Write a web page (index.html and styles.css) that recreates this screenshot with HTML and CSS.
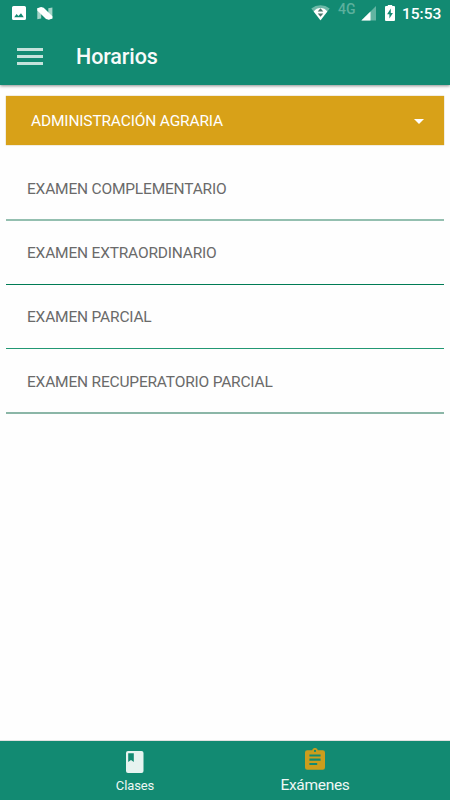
FILE: index.html
```html
<!DOCTYPE html>
<html lang="es">
<head>
<meta charset="utf-8">
<title>Horarios</title>
<link rel="stylesheet" href="styles.css">
</head>
<body>
<header class="top">
  <div class="status">
    <svg class="s-image" width="14" height="14" viewBox="0 0 14 14"><path fill="#fff" fill-rule="evenodd" d="M1.600 0h10.800Q14 0 14 1.600v10.800q0 1.600-1.600 1.600H1.600Q0 14 0 12.400V1.600Q0 0 1.600 0zM2.200 11.200h9.600L9 7.300 6.400 10 4.600 8.100z"/></svg>
    <svg class="s-n" width="16" height="13" viewBox="0 0 16 13"><path fill="#a4d4c8" d="M.3 1.200 4.200.4v11L.3 12.300zM11.300 1.200 15.400.4v11.200l-4.100.9z"/><path fill="#fff" d="M.3 1.200 4.200.1 6.700.8 15.400 9.200v2.400L11.800 12.800 9 12 .3 3.500z"/></svg>
    <svg class="s-wifi" width="19" height="16" viewBox="0 0 19 16"><path fill="#6db9a8" d="M9.500.3Q14.700.3 18.700 3.400L9.500 15.500.300 3.400Q4.300.3 9.500.3z"/><path fill="#fff" d="M9.500 3.100Q13.700 3.100 16.300 6.500L9.500 15.300 2.700 6.500Q5.300 3.100 9.500 3.100z"/><path fill="#4e746a" d="M9.500 3.200 12.300 6.500H6.700zM6.700 8.400h5.600L9.500 11.700z"/></svg>
    <span class="net">4G</span>
    <svg class="s-signal" width="15" height="15" viewBox="0 0 15 15"><path fill="#62b4a1" d="M15 0v14.500H.5z"/><path fill="#fff" d="M9.500 5.500v9H.3z"/></svg>
    <svg class="s-battery" width="10" height="16" viewBox="0 0 10 16"><path fill="#fff" d="M2.800 0h4.400v1h1.800q1 0 1 1V15q0 1-1 1H1q-1 0-1-1V2q0-1 1-1h1.800z"/><path fill="#128a72" d="M5.800 3.600 2.100 9.300h2.300v4.300l3.500-5.700H5.800z"/></svg>
    <span class="clock">15:53</span>
  </div>
  <div class="bar">
    <div class="menu"><i></i><i></i><i></i></div>
    <h1>Horarios</h1>
  </div>
</header>
<main>
  <div class="select"><span>ADMINISTRACIÓN AGRARIA</span><i class="caret"></i></div>
  <ul class="list">
    <li class="soft"><span>EXAMEN COMPLEMENTARIO</span></li>
    <li class="dark"><span>EXAMEN EXTRAORDINARIO</span></li>
    <li class="mid"><span>EXAMEN PARCIAL</span></li>
    <li class="muted"><span>EXAMEN RECUPERATORIO PARCIAL</span></li>
  </ul>
</main>
<nav class="tabs">
  <div class="tab clases">
    <svg width="18" height="22" viewBox="0 0 18 22"><rect width="17.500" height="22" rx="2" fill="#e7f3f0"/><path fill="#128a72" d="M2.200 2.300h5.600v8.600L5 9 2.200 10.900z"/></svg>
    <span>Clases</span>
  </div>
  <div class="tab examenes">
    <svg width="20" height="22" viewBox="0 0 20 22"><path fill="#cb9d1d" fill-rule="evenodd" d="M2.200 2.200h4.900a3 3 0 0 1 5.800 0h4.900q2.200 0 2.200 2.200v15.200q0 2.200-2.200 2.200H2.200Q0 21.800 0 19.600V4.400Q0 2.200 2.200 2.200zM10 1.800a1.100 1.100 0 1 0 0 2.200 1.100 1.100 0 0 0 0-2.200zM4.400 6.400v2.100h11.200V6.400zm0 4.200v2.100h11.200v-2.100zm0 4.300V17h7.800v-2.100z"/></svg>
    <span>Exámenes</span>
  </div>
</nav>
</body>
</html>
```
FILE: styles.css
```css
* { box-sizing: border-box; }
body {
  margin: 0;
  width: 450px;
  height: 800px;
  display: flex;
  flex-direction: column;
  overflow: hidden;
  background: #fefefe;
  font-family: Roboto, "Liberation Sans", sans-serif;
}
svg { display: block; flex: none; }
.top {
  height: 85px;
  background: #128a72;
  box-shadow: 0 1px 3px rgba(0, 0, 0, .45);
}
.status {
  height: 28px;
  display: flex;
  align-items: flex-start;
  padding-left: 12px;
  color: #fff;
}
.s-image { margin-top: 6px; }
.s-n { margin: 7px 0 0 11px; }
.s-wifi { margin: 5px 0 0 258px; }
.net {
  width: 24px;
  padding-left: 8px;
  margin-right: 7px;
  font-size: 14px;
  font-weight: 500;
  line-height: 18px;
  color: #5bb09d;
}
.s-signal { margin-top: 6px; }
.s-battery { margin: 5px 0 0 9px; }
.clock {
  margin-left: 7px;
  font-size: 15.500px;
  font-weight: 500;
  line-height: 28px;
}
.bar {
  height: 57px;
  display: flex;
  align-items: center;
  padding-left: 17px;
}
.menu {
  width: 26px;
  display: grid;
  gap: 4px;
  margin-top: -1px;
}
.menu i { height: 3px; background: #c4e2db; }
h1 {
  margin: 0 0 0 33px;
  font-size: 21.500px;
  letter-spacing: -.1px;
  font-weight: 500;
  line-height: 28px;
  color: #f7fbfa;
}
main { flex: 1; padding: 11px 6px 0; }
.select {
  height: 49px;
  display: flex;
  align-items: center;
  justify-content: space-between;
  padding: 1px 20px 0 25px;
  background: #d8a118;
  box-shadow: 0 0 1px #b99a50;
  color: #fff;
  font-size: 15.500px;
  letter-spacing: -.16px;
}
.caret {
  border: 5px solid transparent;
  border-top: 5px solid #fff;
  border-bottom: 0;
}
.list {
  margin: 12px 0 0;
  padding: 0;
  list-style: none;
}
.list li {
  height: 64px;
  display: flex;
  align-items: center;
  padding: 1px 0 0 21px;
  font-size: 15.500px;
  letter-spacing: -.19px;
  color: #6a6a6a;
  border-bottom: 1px solid #007c55;
}
.list .soft { border-bottom: 2px solid #94bfb0; padding-top: 2px; }
.list .mid { border-color: #229873; padding-top: 1px; }
.list .muted { height: 65px; padding-top: 3px; border-bottom: 2px solid #8bb6a7; }
.tabs {
  height: 59px;
  display: flex;
  background: #128a72;
  box-shadow: 0 0 1px #555;
}
.tab {
  display: flex;
  flex-direction: column;
  align-items: center;
  color: #eef7f5;
}
.clases { width: 180px; margin-left: 45px; padding-top: 10px; }
.examenes { width: 180px; padding-top: 7px; }
.clases span { font-size: 13px; line-height: 18px; margin-top: 4px; letter-spacing: -.1px; }
.examenes span { font-size: 15.500px; line-height: 20px; margin-top: 5px; letter-spacing: -.3px; }
```
